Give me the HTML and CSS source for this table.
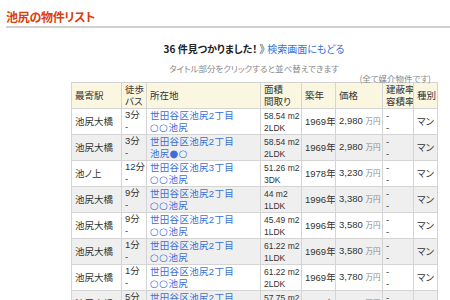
FILE: index.html
```html
<!DOCTYPE html>
<html lang="ja">
<head>
<meta charset="utf-8">
<link rel="stylesheet" href="styles.css">
</head>
<body>
<h1 class="title">池尻の物件リスト</h1>
<div class="wrap">
  <p class="found"><strong>36 件見つかりました！</strong> <span class="arrow">》</span> <a class="back" href="#">検索画面にもどる</a></p>
  <p class="hint">タイトル部分をクリックすると並べ替えできます</p>
  <p class="note">(全て媒介物件です)</p>
  <table class="list">
    <colgroup>
      <col class="c1"><col class="c2"><col class="c3"><col class="c4"><col class="c5"><col class="c6"><col class="c7"><col class="c8">
    </colgroup>
    <thead>
      <tr><th>最寄駅</th><th>徒歩<br>バス</th><th>所在地</th><th>面積<br>間取り</th><th>築年</th><th>価格</th><th class="tight">建蔽率<br>容積率</th><th>種別</th></tr>
    </thead>
    <tbody>
      <tr><td>池尻大橋</td><td class="top">3分<br>-</td><td class="addr"><a href="#">世田谷区池尻2丁目<br><span class="mk">○○</span>池尻</a></td><td class="area">58.54 m2<br>2LDK</td><td>1969年</td><td class="num">2,980 <span class="yen">万円</span></td><td class="dash">-<br>-</td><td>マン</td></tr>
      <tr class="alt"><td>池尻大橋</td><td class="top">3分<br>-</td><td class="addr"><a href="#">世田谷区池尻2丁目<br>池尻<span class="mk">●○</span></a></td><td class="area">58.54 m2<br>2LDK</td><td>1969年</td><td class="num">2,980 <span class="yen">万円</span></td><td class="dash">-<br>-</td><td>マン</td></tr>
      <tr><td>池ノ上</td><td class="top">12分<br>-</td><td class="addr"><a href="#">世田谷区池尻3丁目<br><span class="mk">○○</span>池尻</a></td><td class="area">51.26 m2<br>3DK</td><td>1978年</td><td class="num">3,230 <span class="yen">万円</span></td><td class="dash">-<br>-</td><td>マン</td></tr>
      <tr class="alt"><td>池尻大橋</td><td class="top">9分<br>-</td><td class="addr"><a href="#">世田谷区池尻2丁目<br><span class="mk">○○</span>池尻</a></td><td class="area">44 m2<br>1LDK</td><td>1996年</td><td class="num">3,380 <span class="yen">万円</span></td><td class="dash">-<br>-</td><td>マン</td></tr>
      <tr><td>池尻大橋</td><td class="top">9分<br>-</td><td class="addr"><a href="#">世田谷区池尻2丁目<br><span class="mk">○○</span>池尻</a></td><td class="area">45.49 m2<br>1LDK</td><td>1996年</td><td class="num">3,580 <span class="yen">万円</span></td><td class="dash">-<br>-</td><td>マン</td></tr>
      <tr class="alt"><td>池尻大橋</td><td class="top">1分<br>-</td><td class="addr"><a href="#">世田谷区池尻2丁目<br><span class="mk">○○</span>池尻</a></td><td class="area">61.22 m2<br>1LDK</td><td>1969年</td><td class="num">3,580 <span class="yen">万円</span></td><td class="dash">-<br>-</td><td>マン</td></tr>
      <tr><td>池尻大橋</td><td class="top">1分<br>-</td><td class="addr"><a href="#">世田谷区池尻2丁目<br><span class="mk">○○</span>池尻</a></td><td class="area">61.22 m2<br>2LDK</td><td>1969年</td><td class="num">3,780 <span class="yen">万円</span></td><td class="dash">-<br>-</td><td>マン</td></tr>
      <tr class="alt"><td>池尻大橋</td><td class="top">5分<br>-</td><td class="addr"><a href="#">世田谷区池尻2丁目<br><span class="mk">○○</span>池尻</a></td><td class="area">57.75 m2<br>2LDK</td><td>1969年</td><td class="num">3,980 <span class="yen">万円</span></td><td class="dash">-<br>-</td><td>マン</td></tr>
    </tbody>
  </table>
</div>
</body>
</html>
```
FILE: styles.css
```css
html, body {
  margin: 0;
  padding: 0;
  background: #fff;
}
body {
  font-family: "Noto Sans CJK JP", "Noto Sans", sans-serif;
  font-feature-settings: "palt";
  color: #333;
  overflow: hidden;
}
.title {
  margin: 10px 0 0 6px;
  padding: 0 0 2px 0;
  font-size: 12px;
  line-height: 14px;
  font-weight: bold;
  color: #d8400e;
  border-bottom: 2px solid #d0d0d0;
  letter-spacing: -0.3px;
}
.wrap {
  width: 366px;
  margin-left: 71px;
}
.found {
  margin: 13px 0 0 0;
  text-align: center;
  font-size: 10px;
  line-height: 14px;
  color: #222;
}
.found strong {
  font-weight: bold;
}
.arrow {
  color: #555;
  font-size: 11px;
}
.back {
  color: #3a6fd8;
  text-decoration: none;
}
.hint {
  margin: 7px 0 0 0;
  text-align: center;
  font-size: 8.5px;
  line-height: 11px;
  color: #888;
}
.note {
  margin: 0;
  text-align: right;
  padding-right: 6px;
  font-size: 8.5px;
  line-height: 8px;
  color: #888;
}
.list {
  width: 366px;
  table-layout: fixed;
  border-collapse: collapse;
  font-family: "Liberation Sans", "Noto Sans CJK JP", sans-serif;
  font-size: 9.5px;
  line-height: 12px;
  color: #333;
}
.list tr {
  height: 26px;
}
.list th,
.list td {
  border: 1px solid #d4d4d4;
  padding: 0 3px;
  text-align: left;
  vertical-align: middle;
  white-space: nowrap;
  overflow: hidden;
}
.list th {
  background: #faf6e0;
  font-weight: normal;
  font-size: 9.5px;
}
.list th.tight {
  padding: 0 1px 0 3px;
}
.list tr.alt td {
  background: #efefef;
}
.list td.top {
  vertical-align: top;
  padding-top: 0;
}
.c1 { width: 50px; }
.c2 { width: 25px; }
.c3 { width: 114px; }
.c4 { width: 41px; }
.c5 { width: 34px; }
.c6 { width: 47px; }
.c7 { width: 31px; }
.c8 { width: 24px; }
.addr a {
  color: #3a6fd8;
  text-decoration: none;
  letter-spacing: 0.3px;
}
.addr .mk {
  font-family: "DejaVu Sans", sans-serif;
  font-size: 10px;
  letter-spacing: 0.5px;
}
.area {
  font-size: 8.5px;
}
.yen {
  font-size: 7.5px;
  color: #888;
}
```
